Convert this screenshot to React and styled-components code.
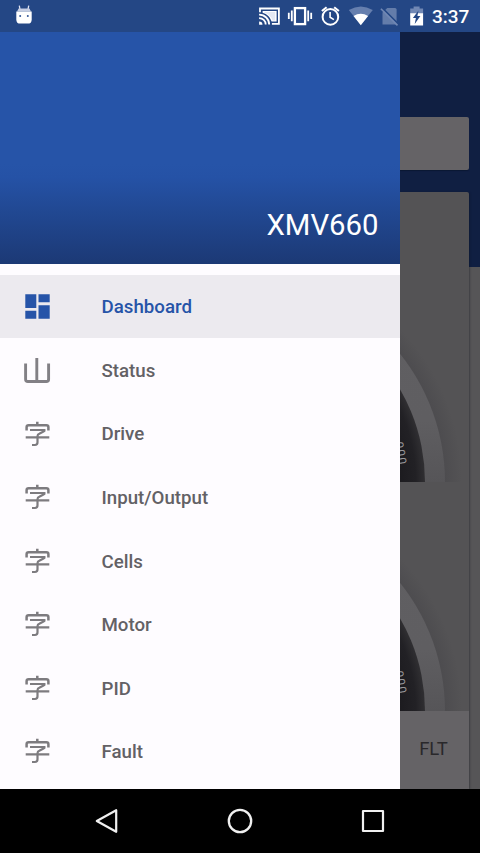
import React from "react";
import styled, { createGlobalStyle } from "styled-components";

const GlobalStyle = createGlobalStyle`
  * { box-sizing: border-box; }
  body { margin: 0; background: #000; font-family: Roboto, "Liberation Sans", sans-serif; overflow: hidden; }
`;

const Screen = styled.div`
  width: 480px;
  height: 853px;
  display: grid;
  grid-template-rows: 32px 757px 64px;
  overflow: hidden;
`;

const StatusBar = styled.header`
  display: flex;
  justify-content: space-between;
  background: #244785;
  color: #fff;
  svg { display: block; }
`;

const Clock = styled.time`
  font-size: 19px;
  font-weight: 500;
  line-height: 34px;
  width: 48px;
  white-space: nowrap;
`;

const StatusIcons = styled.div`
  display: flex;
`;

const Body = styled.div`
  display: grid;
  grid-template-columns: 400px 80px;
  min-height: 0;
`;

const Drawer = styled.nav`
  background: #fefcff;
  overflow: hidden;
`;

const DrawerHeader = styled.div`
  height: 232px;
  display: flex;
  align-items: flex-end;
  justify-content: flex-end;
  padding: 0 21.5px 21px 0;
  color: #fff;
  font-size: 29.3px;
  line-height: 36px;
  background: linear-gradient(#2654a8 0, #2654a8 132px, #2552a6 145px, #214892 180px, #1c3975 232px);
`;

const Menu = styled.ul`
  list-style: none;
  margin: 0;
  padding: 10.8px 0 0;
`;

const MenuItem = styled.li`
  height: 63.55px;
  display: flex;
  align-items: center;
  gap: 49.5px;
  padding-left: 23px;
  font-size: 18.7px;
  line-height: 22px;
  font-weight: 500;
  color: ${(p) => (p.$active ? "#2654a8" : "#636165")};
  background: ${(p) => (p.$active ? "#eceaef" : "transparent")};
  svg { display: block; flex: none; }
`;

const Label = styled.span`
  padding-top: 1.5px;
`;

const Backdrop = styled.main`
  display: flex;
  flex-direction: column;
  gap: 22px;
  padding: 85px 11px 0 0;
  background: linear-gradient(#101f42 0, #101f42 235px, #565557 235px);
  overflow: hidden;
`;

const SearchCard = styled.div`
  height: 53px;
  flex: none;
  background: #656366;
  border-radius: 0 2px 2px 0;
  box-shadow: 0 1px 1px #0b1834;
`;

const GaugeCard = styled.section`
  flex: 1;
  display: flex;
  flex-direction: column;
  background: #545355;
  border-radius: 0 2px 0 0;
  box-shadow: 1px 0 2px rgba(15, 18, 30, 0.35);
  svg { display: block; flex: none; }
`;

const GaugeSlot = styled.div`
  height: ${(p) => p.$height}px;
  display: flex;
  align-items: flex-end;
`;

const Tab = styled.div`
  flex: 1;
  display: flex;
  justify-content: center;
  background: #656366;
  color: #29282b;
  font-size: 18.5px;
  line-height: 76px;
  padding-right: 2px;
`;

const SystemNav = styled.footer`
  background: #000;
  display: grid;
  grid-template-columns: repeat(3, 133.3px);
  justify-content: center;
  align-items: center;
  justify-items: center;
  svg { display: block; }
`;

const Robot = () => (
  <svg width="48" height="32">
    <path d="M20 9.5 19.3 5.6M28 9.5 28.7 5.6" stroke="#dfe3f1" strokeWidth="1.3" />
    <path d="M18.6 8.6h10.8l1.6 3H17z" fill="#c6cee3" />
    <path d="M16.3 11.4h15.4v8q0 4.2-4 4.2h-7.4q-4 0-4-4.2z" fill="#fff" />
    <circle cx="20.2" cy="15.9" r="1" fill="#315697" />
    <circle cx="27.8" cy="15.9" r="1" fill="#315697" />
  </svg>
);

const StatusGlyphs = () => (
  <svg width="182" height="32" viewBox="250 0 182 32" fill="none">
    <g stroke="#fff" strokeWidth="1.8">
      <path d="M260 12.2V8.5h18.9v15.4h-7" />
      <path d="M259.1 14.6a10 10 0 0 1 10.1 10M259.1 18.1a6.5 6.5 0 0 1 6.6 6.5" />
      <path d="M259.1 21.4a3.4 3.4 0 0 1 3.4 3.3h-3.4z" fill="#fff" stroke="none" />
    </g>
    <path d="M262.6 10.9h14v10.7h-5A13 13 0 0 0 262.6 12.8z" fill="#fff" />
    <path d="M264.2 12.1h11v8.3h-2.6a14.5 14.5 0 0 0-8.4-7.8z" fill="#e3e8f3" />
    <g stroke="#fff">
      <rect x="294.9" y="8.1" width="10.2" height="16" strokeWidth="2.3" />
      <path d="M291.8 10.6v10.6M308.2 10.6v10.6M288.8 12.8v6.3M311.2 12.8v6.3" strokeWidth="1.8" />
      <circle cx="330.4" cy="16.9" r="7.8" strokeWidth="2" />
      <path d="M330.1 12v5.3l3.8 2.3" strokeWidth="1.6" />
      <path d="m321.9 11.1 4.7-3.9M338.9 11.1l-4.7-3.9" strokeWidth="2" />
    </g>
    <path d="M348.8 10.1q12-7.2 24 0l-12 15z" fill="#667fae" />
    <path d="M353.5 16q7.3-4.4 14.6 0L360.8 25.2z" fill="#fff" />
    <path d="M387.3 8h7.7q1.6 0 1.6 1.6v15h-14.1V12.4z" fill="#647daa" />
    <path d="m382.4 8.1 16.2 16.3" stroke="#244785" strokeWidth="1.8" />
    <path d="m380.9 8.7 16.6 16.7" stroke="#7188b4" strokeWidth="1.6" />
    <path d="M413.6 6.5h6v2.1h3.5v5H410.2v-5h3.4z" fill="#7188b4" />
    <path d="M410.2 13.2h12.9v12.3h-12.9z" fill="#fff" />
    <path d="m418.5 10.5-5.6 7.6h3l-1.2 6 5.7-8h-3z" fill="#244785" />
  </svg>
);

const DashboardIcon = () => (
  <svg width="29" height="32" viewBox="0 0 29 32" fill="currentColor">
    <path d="M2.3 3.3h11v13.6h-11zM15.5 3.3h11.2v7.9H15.5zM15.5 14.2h11.2v13.6H15.5zM2.3 19.8h11v8h-11z" />
  </svg>
);

const StatusIcon = () => (
  <svg width="29" height="32" viewBox="0 0 29 32" fill="none" stroke="#828085" strokeWidth="2.9">
    <path d="M2.6 9.4v15.8q0 2.3 2.3 2.3h18.4q2.3 0 2.3-2.3V9.4M13.8 4v23.5" />
  </svg>
);

const CharacterIcon = () => (
  <svg width="29" height="32" viewBox="0 0 29 32" fill="none" stroke="#7d7b7f" strokeWidth="2.5">
    <path d="M14.3 3.7v3.5M3.6 12.5V9.2q0-2 2-2h17.8q2 0 2 2v3.3" />
    <path d="M7 12h14.5q.3 1-1 1.6l-4.2 2.1q-1.8.7-1.8 2.5v6.1q0 2.7-2.6 2.7H9M2.7 19.4h23.6" strokeWidth="2.2" />
  </svg>
);

const Gauge = ({ id }) => (
  <svg width="69" height="160" viewBox="400 -160 69 160">
    <defs>
      <linearGradient id={`${id}-rim`} x1="0" y1="0" x2="0" y2="1">
        <stop offset="0" stopColor="#605f62" />
        <stop offset="0.35" stopColor="#5f5e61" />
        <stop offset="0.5" stopColor="#565558" />
      </linearGradient>
      <radialGradient id={`${id}-shade`} gradientUnits="userSpaceOnUse" cx="240" cy="0" r="222">
        <stop offset="0.92" stopColor="#4d4c4f" />
        <stop offset="1" stopColor="#545355" />
      </radialGradient>
      <radialGradient id={`${id}-face`} gradientUnits="userSpaceOnUse" cx="240" cy="0" r="185">
        <stop offset="0.86" stopColor="#1c1b1f" />
        <stop offset="0.95" stopColor="#222125" />
        <stop offset="1" stopColor="#302f32" />
      </radialGradient>
    </defs>
    <circle cx="240" cy="0" r="222" fill={`url(#${id}-shade)`} />
    <circle cx="240" cy="0" r="205" fill={`url(#${id}-rim)`} />
    <circle cx="240" cy="0" r="185" fill={`url(#${id}-face)`} />
    <text
      transform="translate(394.5 -39.5) rotate(80)"
      fontFamily="Roboto, sans-serif"
      fontSize="12"
      letterSpacing="1.2"
      fill="#98979a"
    >
      000
    </text>
  </svg>
);

const items = ["Dashboard", "Status", "Drive", "Input/Output", "Cells", "Motor", "PID", "Fault"];

const iconFor = (name) => {
  if (name === "Dashboard") return <DashboardIcon />;
  if (name === "Status") return <StatusIcon />;
  return <CharacterIcon />;
};

export default function App() {
  return (
    <Screen>
      <GlobalStyle />
      <StatusBar>
        <Robot />
        <StatusIcons>
          <StatusGlyphs />
          <Clock>3:37</Clock>
        </StatusIcons>
      </StatusBar>
      <Body>
        <Drawer>
          <DrawerHeader>XMV660</DrawerHeader>
          <Menu>
            {items.map((name, i) => (
              <MenuItem key={name} $active={i === 0}>
                {iconFor(name)}
                <Label>{name}</Label>
              </MenuItem>
            ))}
          </Menu>
        </Drawer>
        <Backdrop>
          <SearchCard />
          <GaugeCard>
            <GaugeSlot $height={290}>
              <Gauge id="upper" />
            </GaugeSlot>
            <GaugeSlot $height={229}>
              <Gauge id="lower" />
            </GaugeSlot>
            <Tab>FLT</Tab>
          </GaugeCard>
        </Backdrop>
      </Body>
      <SystemNav>
        <svg width="28" height="28" fill="none" stroke="#f0f0f0" strokeWidth="2.2" strokeLinejoin="round">
          <path d="M23.2 3.2v21.6L3.8 14z" />
        </svg>
        <svg width="28" height="28" fill="none" stroke="#f0f0f0" strokeWidth="2.3">
          <circle cx="14" cy="14" r="11.2" />
        </svg>
        <svg width="28" height="28" fill="none" stroke="#f0f0f0" strokeWidth="2.2" strokeLinejoin="round">
          <path d="M4 4h20v20H4z" />
        </svg>
      </SystemNav>
    </Screen>
  );
}
